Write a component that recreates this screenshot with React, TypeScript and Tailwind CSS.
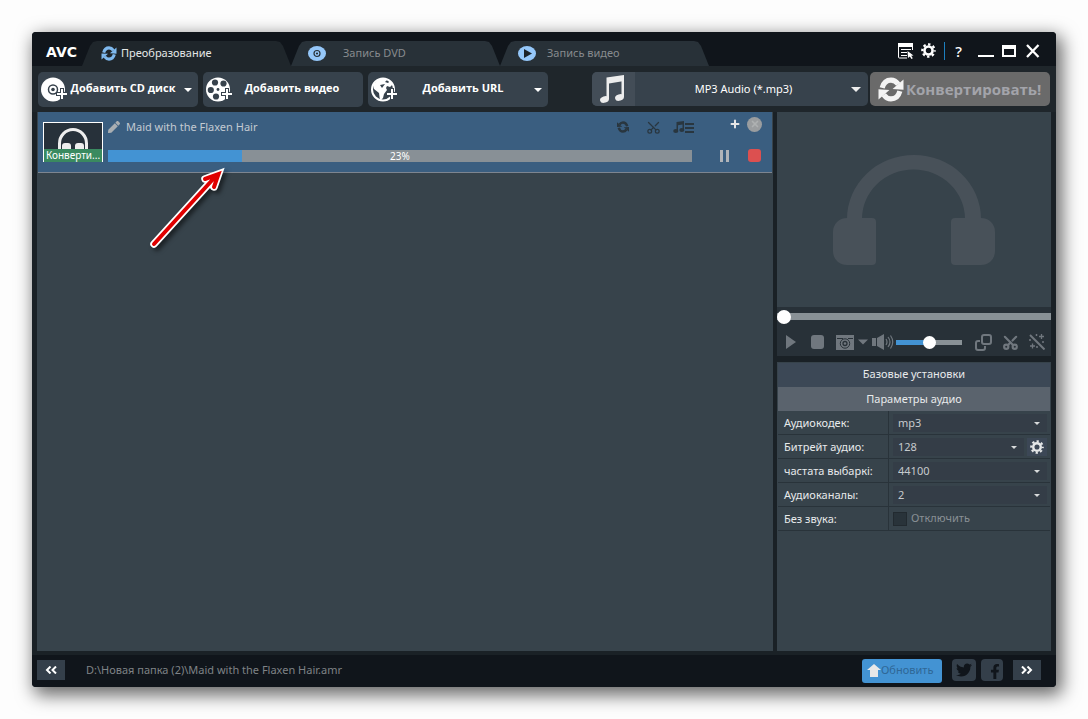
import { FC, ReactNode } from 'react';
import { FaFacebookF, FaPen, FaTwitter } from 'react-icons/fa';
import { Plus, Scissors, X } from 'lucide-react';

type IconProps = { className?: string };

const SyncIcon: FC<IconProps> = ({ className }) => (
  <svg viewBox="0 0 24 24" className={className} fill="currentColor" aria-hidden="true">
    <path d="M3.500 10.500C5 5 8 3 12 3c3 0 5 1.300 7 4" fill="none" stroke="currentColor" strokeWidth="5" />
    <path d="M24 2.500v9.700l-10.500-.7z" />
    <path d="M20.500 13.500C19 19 16 21 12 21c-3 0-5-1.300-7-4" fill="none" stroke="currentColor" strokeWidth="5" />
    <path d="M0 21.500v-9.700l10.500.7z" />
  </svg>
);

const Headphones: FC<IconProps> = ({ className }) => (
  <svg viewBox="0 0 162 110" className={className} fill="currentColor" aria-hidden="true">
    <path d="M14 64a67 64 0 0 1 134 0h-16a51 49 0 0 0-103 0z" />
    <path d="M14 63h25q4 0 4 4v39q0 4-4 4H14C6 110 0 104 0 96V77c0-8 6-14 14-14z" />
    <path d="M148 63h-26q-4 0-4 4v39q0 4 4 4h26c8 0 14-6 14-14V77c0-8-6-14-14-14z" />
  </svg>
);

const SmallHeadphones = () => (
  <svg viewBox="0 0 32 22" className="w-8 h-[22px] text-[#eeeeee]" aria-hidden="true">
    <path d="M2.500 22v-5.500a13.500 14 0 0 1 27 0V22" fill="none" stroke="currentColor" strokeWidth="3" />
    <path d="M5 22v-3q0-3 3-3h3q3 0 3 3v3zM18 22v-3q0-3 3-3h3q3 0 3 3v3z" fill="currentColor" />
  </svg>
);

const NoteIcon: FC<IconProps> = ({ className }) => (
  <svg viewBox="0 0 26 28" className={className} fill="currentColor" aria-hidden="true">
    <path d="M6.500 2.500 24 0v6L9 8.500V24H6.500z" />
    <path d="M21.500 3H24v19h-2.500z" />
    <ellipse cx="4.500" cy="24.500" rx="4.500" ry="3.200" transform="rotate(-18 4.500 24.500)" />
    <ellipse cx="19.500" cy="22.500" rx="4.500" ry="3.200" transform="rotate(-18 19.500 22.500)" />
  </svg>
);

const NoteListIcon = () => (
  <svg viewBox="0 0 22 12" className="w-[22px] h-3" fill="currentColor" aria-hidden="true">
    <path d="M3.500 1 11 0v9.500h-1.500V3.500L5 4.200V11H3.500z" />
    <ellipse cx="2.800" cy="10" rx="2.600" ry="1.900" />
    <ellipse cx="8.800" cy="9" rx="2.500" ry="1.900" />
    <path d="M12 2h9v2h-9zM12 6h9v2h-9zM12 10h9v2h-9z" />
  </svg>
);

// round white icons of the "add" buttons, all share the plus in the corner
const CornerPlus = () => (
  <>
    <path d="M15 15h4v-4h4v4h4v4h-4v4h-4v-4h-4z" fill="#37424c" />
    <path d="M16 16h4v-4h2v4h4v2h-4v4h-2v-4h-4z" fill="#fff" />
  </>
);

const DiscAdd = () => (
  <svg viewBox="0 0 27 25" className="w-[27px] h-[25px] shrink-0" aria-hidden="true">
    <circle cx="12" cy="12.500" r="12" fill="#fff" />
    <circle cx="12" cy="12.500" r="4.500" fill="#fff" stroke="#37424c" strokeWidth="1.500" />
    <circle cx="12" cy="12.500" r="1.800" fill="#37424c" />
    <CornerPlus />
  </svg>
);

const ReelAdd = () => (
  <svg viewBox="0 0 27 25" className="w-[27px] h-[25px] shrink-0" aria-hidden="true">
    <circle cx="12" cy="12.500" r="12" fill="#fff" />
    <g fill="#37424c">
      <circle cx="9" cy="5.500" r="3.100" />
      <circle cx="17.500" cy="6.500" r="3.100" />
      <circle cx="4.800" cy="13" r="3.100" />
      <circle cx="10" cy="19.500" r="3.100" />
      <circle cx="12" cy="12.500" r="1.400" />
    </g>
    <CornerPlus />
  </svg>
);

const GlobeAdd = () => (
  <svg viewBox="0 0 27 25" className="w-[27px] h-[25px] shrink-0" aria-hidden="true">
    <circle cx="12" cy="12.500" r="11" fill="none" stroke="#fff" strokeWidth="2" />
    <path
      d="M2 8 7 3l6-2 3 2-2 2 3 1 2-2 3 3-3 3-3-1-1 2 1 2-3 4-1 4-3 3-1-8-5-4z"
      fill="#fff"
    />
    <path d="m9 8 2 3 3-4z" fill="#37424c" />
    <CornerPlus />
  </svg>
);

const Caret: FC<IconProps> = ({ className }) => (
  <svg viewBox="0 0 10 5" className={className} fill="currentColor" aria-hidden="true">
    <path d="M0 0h10L5 5z" />
  </svg>
);

const LogIcon = () => (
  <svg viewBox="0 0 16 16" className="w-4 h-4" aria-hidden="true">
    <path d="M14.500 7V1H.500v13q0 1 1 1H9" fill="none" stroke="#fff" />
    <path d="M0 0h15v4H0zM3 6h10v1H3zM3 9h6v1H3zM3 12h6v1H3z" fill="#fff" />
    <path d="m9.500 8 6 4.500-2.300.300 1.600 2.500-1.400.700-1.500-2.600-1.900 1.600z" fill="#fff" />
  </svg>
);

const GearIcon: FC<IconProps> = ({ className }) => (
  <svg viewBox="0 0 16 16" className={className} fill="none" stroke="currentColor" aria-hidden="true">
    <circle cx="8" cy="8" r="4.300" strokeWidth="2.800" />
    <circle cx="8" cy="8" r="6.600" strokeWidth="2.400" strokeDasharray="2.600 2.584" strokeDashoffset="1.300" />
  </svg>
);

const CameraIcon = () => (
  <svg viewBox="0 0 18 15" className="w-[18px] h-[15px]" aria-hidden="true">
    <path d="M0 0h18v15H0z" fill="currentColor" />
    <path d="M1 3.500h6M12 3.500h5" stroke="#283138" />
    <circle cx="9" cy="8.500" r="4.700" fill="currentColor" stroke="#283138" />
    <circle cx="9" cy="8.500" r="2" fill="none" stroke="#283138" strokeWidth="1.300" />
  </svg>
);

const SpeakerIcon = () => (
  <svg viewBox="0 0 22 16" className="w-[22px] h-4" aria-hidden="true">
    <path d="M0 4h4v8H0zM5 4l7-4v16l-7-4z" fill="currentColor" />
    <path d="M14 5q2 3 0 6M16 3q4 5 0 10M18.500 1.500q4.500 6.500 0 13" fill="none" stroke="currentColor" strokeWidth="1.200" />
  </svg>
);

const OverlapIcon = () => (
  <svg viewBox="0 0 17 17" className="w-[17px] h-[17px]" fill="none" stroke="currentColor" strokeWidth="2" aria-hidden="true">
    <rect x="7" y="1" width="9" height="9" rx="2" />
    <path d="M5 7H3Q1 7 1 9v5q0 2 2 2h5q2 0 2-2v-2" />
  </svg>
);

const WandIcon = () => (
  <svg viewBox="0 0 16 16" className="w-4 h-4" fill="none" stroke="currentColor" aria-hidden="true">
    <path d="m1 1 14.500 14.500" strokeWidth="2" />
    <path d="M12.500 0v5M10 2.500h5M3.500 9.500v5M1 12h5" strokeWidth="1.300" />
    <path d="M7.500 0v2M6.500 1h2M14 7v2M13 8h2M8 12v2M7 13h2M1 5v2M0 6h2" />
  </svg>
);

type TabProps = { icon: ReactNode; label: string; active?: boolean; gap: string };

const Tab: FC<TabProps> = ({ icon, label, active, gap }) => (
  <button
    type="button"
    role="tab"
    aria-selected={!!active}
    className={`flex items-center ${gap} w-[209px] h-[25px] shrink whitespace-nowrap text-[11px] [clip-path:polygon(0_100%,8px_5px,11px_1px,15px_0,calc(100%-15px)_0,calc(100%-11px)_1px,calc(100%-8px)_5px,100%_100%)] ${
      active ? 'bg-[#1f262b] text-[#e4e6e6]' : 'bg-[#283138] text-[#878b8e]'
    }`}
  >
    {icon}
    <span>{label}</span>
  </button>
);

type AddProps = { icon: ReactNode; label: string; width: string; caret?: boolean };

const AddButton: FC<AddProps> = ({ icon, label, width, caret }) => (
  <button
    type="button"
    className={`${width} flex items-center h-[35px] rounded-[5px] bg-[#37424c] pl-[3px] pr-1.5 text-[11px] font-bold font-['Open_Sans',sans-serif] text-white whitespace-nowrap`}
  >
    {icon}
    <span className="flex-1 text-center pr-1.5 pb-0.5">{label}</span>
    {caret && <Caret className="w-2 h-1" />}
  </button>
);

type SelectProps = { id: string; value: string; gear?: boolean };

const SettingSelect: FC<SelectProps> = ({ id, value, gear }) => (
  <div className="flex flex-1 items-center gap-[3px] pl-1 pr-[3px]">
    <div className="relative flex-1">
      <select
        id={id}
        defaultValue={value}
        className="block w-full h-[18px] appearance-none bg-[#343d47] pl-[5px] text-[11px] leading-[18px] text-[#c6cacd] outline-none"
      >
        <option>{value}</option>
      </select>
      <Caret className="absolute right-[7px] top-2 w-1.5 h-[3px] text-[#d8dadb] pointer-events-none" />
    </div>
    {gear && (
      <button type="button" aria-label="Настройки битрейта" className="flex items-center justify-center w-5 h-[18px] bg-[#3c4756] text-[#e6e8e9]">
        <GearIcon className="w-3.5 h-3.5" />
      </button>
    )}
  </div>
);

const settings = [
  { id: 'codec', label: 'Аудиокодек:', value: 'mp3' },
  { id: 'bitrate', label: 'Битрейт аудио:', value: '128', gear: true },
  { id: 'rate', label: 'частата выбаркі:', value: '44100' },
  { id: 'channels', label: 'Аудиоканалы:', value: '2' },
];

const progress = 23;

const Header = () => (
  <header className="flex items-end h-[34px] bg-[#10151b]">
    <h1 className="w-[50px] shrink-0 pl-3.5 pb-1 text-sm font-bold text-white font-['DejaVu_Sans',sans-serif]">AVC</h1>
    <nav role="tablist" className="flex">
      <Tab active gap="gap-1 pl-[19px]" label="Преобразование" icon={<SyncIcon className="w-4 h-[15px] text-[#7fb9ee]" />} />
      <Tab
        gap="gap-[17px] pl-[17px]"
        label="Запись DVD"
        icon={
          <svg viewBox="0 0 18 15" className="w-[18px] h-[15px]" aria-hidden="true">
            <ellipse cx="9" cy="7.500" rx="9" ry="7.500" fill="#95c7f9" />
            <circle cx="9" cy="7.500" r="3" fill="none" stroke="#283138" strokeWidth="1.200" />
            <circle cx="9" cy="7.500" r="1.100" fill="#283138" />
          </svg>
        }
      />
      <Tab
        gap="gap-[11px] pl-[18px]"
        label="Запись видео"
        icon={
          <svg viewBox="0 0 18 15" className="w-[18px] h-[15px]" aria-hidden="true">
            <ellipse cx="9" cy="7.500" rx="9" ry="7.500" fill="#95c7f9" />
            <path d="M6 3v9l8-4.500z" fill="#1b2228" />
          </svg>
        }
      />
    </nav>
    <div className="ml-auto flex items-center h-full pt-1 pr-3.5 text-white">
      <button type="button" aria-label="Журнал"><LogIcon /></button>
      <button type="button" aria-label="Настройки" className="ml-[7px] pb-0.5"><GearIcon className="w-[15px] h-[15px]" /></button>
      <span className="w-px h-[18px] ml-2 bg-[#1c7fbf]" />
      <button type="button" aria-label="Справка" className="ml-2.5 text-[15px] leading-4 font-medium">?</button>
      <button type="button" aria-label="Свернуть" className="ml-4 w-4 h-3 border-b-2 border-white" />
      <button type="button" aria-label="Развернуть" className="ml-2 w-3.5 h-3 border-2 border-t-4 border-white" />
      <button type="button" aria-label="Закрыть" className="ml-2">
        <svg viewBox="0 0 18 18" className="w-[18px] h-[18px]" aria-hidden="true">
          <path d="m3 3 11.500 12M14.500 3 3 15" stroke="#fff" strokeWidth="2.300" />
        </svg>
      </button>
    </div>
  </header>
);

const Toolbar = () => (
  <div className="flex items-start gap-[5px] h-[46px] pt-1.5 px-1.5 bg-[#1f262b]">
    <AddButton icon={<DiscAdd />} label="Добавить CD диск" width="w-40" caret />
    <AddButton icon={<ReelAdd />} label="Добавить видео" width="w-40" />
    <AddButton icon={<GlobeAdd />} label="Добавить URL" width="w-[180px]" caret />
    <div className="ml-auto flex gap-0.5">
      <div className="relative flex w-[276px] h-[34px] rounded-[5px] overflow-hidden bg-[#37424c]">
        <span className="flex items-center w-[43px] pl-2 bg-[#434d57] text-[#ededed]">
          <NoteIcon className="w-[26px] h-7" />
        </span>
        <select
          aria-label="Формат"
          defaultValue="mp3"
          className="flex-1 appearance-none bg-transparent pr-4 text-[11px] text-white text-center [text-align-last:center] outline-none"
        >
          <option value="mp3">MP3 Audio (*.mp3)</option>
        </select>
        <Caret className="absolute right-[7px] top-[15px] w-2.5 h-[5px] text-[#ededed] pointer-events-none" />
      </div>
      <button
        type="button"
        className="flex items-center w-[180px] h-[34px] rounded-[5px] bg-[#6a6a6a] pl-2 gap-0.5 text-[15px] font-bold font-['Open_Sans',sans-serif] text-[#a3a4aa] whitespace-nowrap"
      >
        <SyncIcon className="w-[26px] h-[25px] shrink-0 text-[#f3f3f3]" />
        <span>Конвертировать!</span>
      </button>
    </div>
  </div>
);

const FileRow = () => (
  <div className="flex h-[61px] mx-px pl-[5px] bg-[#3a5e80] border-b border-[#7d8590]">
    <div className="mt-2.5 w-[60px] h-10 flex flex-col justify-end border border-b-0 border-white bg-[#27313a]">
      <div className="flex justify-center h-[22px]">
        <SmallHeadphones />
      </div>
      <p className="h-[13px] bg-[#3a8a60] text-center text-[10px] leading-[13px] text-white whitespace-nowrap">Конверти...</p>
    </div>
    <div className="flex-1 min-w-0 ml-[5px] pt-1.5">
      <div className="flex items-center h-[18px] text-[#c3cad2]">
        <FaPen className="w-3 h-3 text-[#a9aeb2]" />
        <span className="ml-1.5 text-[11px]">Maid with the Flaxen Hair</span>
        <div className="ml-auto mr-[-3px] flex items-center text-[#29363f]">
          <button type="button" aria-label="Обновить файл"><SyncIcon className="w-3 h-3 -scale-x-100" /></button>
          <button type="button" aria-label="Обрезать" className="ml-[17px]"><Scissors className="w-[15px] h-[15px] -rotate-90" /></button>
          <button type="button" aria-label="Звуковые дорожки" className="ml-3"><NoteListIcon /></button>
        </div>
      </div>
      <div
        role="progressbar"
        aria-label="Ход преобразования"
        aria-valuenow={progress}
        className="relative mt-3.5 h-3 bg-[#889096]"
      >
        <div className="h-full bg-[#4393d3]" style={{ width: `${progress}%` }} />
        <span className="absolute inset-0 text-center text-[10px] leading-3 text-white">{progress}%</span>
      </div>
    </div>
    <div className="w-20 pr-2.5 pt-1">
      <div className="flex items-center justify-end gap-1.5 h-4">
        <button type="button" aria-label="Добавить"><Plus className="w-3 h-3 text-[#e6e6e6]" strokeWidth={4} /></button>
        <button type="button" aria-label="Удалить" className="flex items-center justify-center w-[15px] h-[15px] rounded-full bg-[#9a9d9f]">
          <X className="w-2.5 h-2.5 text-[#aeb1b2]" strokeWidth={4} />
        </button>
      </div>
      <div className="flex items-center justify-end mt-[17px] h-[13px]">
        <button type="button" aria-label="Пауза" className="w-[9px] h-3 border-x-[3px] border-[#b0b4b9]" />
        <button type="button" aria-label="Стоп" className="ml-[19px] mr-px w-[13px] h-[13px] rounded-[3px] bg-[#dc5050]" />
      </div>
    </div>
  </div>
);

const Player = () => (
  <section className="bg-[#283138]">
    <div className="flex items-center justify-center h-[195px] bg-[#37434b]">
      <Headphones className="w-[162px] h-[110px] text-[#485159]" />
    </div>
    <div className="h-[49px]">
      <input
        type="range"
        aria-label="Позиция"
        defaultValue={0}
        className="block w-full h-[18px] appearance-none bg-transparent [&::-webkit-slider-runnable-track]:h-[7px] [&::-webkit-slider-runnable-track]:bg-[#899196] [&::-webkit-slider-thumb]:appearance-none [&::-webkit-slider-thumb]:w-3.5 [&::-webkit-slider-thumb]:h-3.5 [&::-webkit-slider-thumb]:-mt-[3px] [&::-webkit-slider-thumb]:rounded-full [&::-webkit-slider-thumb]:bg-white"
      />
      <div className="flex items-center h-[34px] pl-[9px] pr-1.5 text-[#70777e]">
        <button type="button" aria-label="Воспроизвести">
          <svg viewBox="0 0 10 14" className="w-2.5 h-3.5" fill="currentColor" aria-hidden="true"><path d="M0 0v14l10-7z" /></svg>
        </button>
        <button type="button" aria-label="Остановить" className="ml-[15px] w-[13px] h-3.5 rounded-[3px] bg-[#70777e]" />
        <button type="button" aria-label="Снимок" className="ml-3"><CameraIcon /></button>
        <button type="button" aria-label="Варианты снимка" className="ml-1"><Caret className="w-2.5 h-1.5" /></button>
        <button type="button" aria-label="Звук" className="ml-1"><SpeakerIcon /></button>
        <input
          type="range"
          aria-label="Громкость"
          defaultValue={50}
          className="ml-0.5 w-[66px] h-3.5 appearance-none bg-transparent [&::-webkit-slider-runnable-track]:h-[5px] [&::-webkit-slider-runnable-track]:bg-[linear-gradient(to_right,#4393d3_50%,#899196_50%)] [&::-webkit-slider-thumb]:appearance-none [&::-webkit-slider-thumb]:w-[13px] [&::-webkit-slider-thumb]:h-[13px] [&::-webkit-slider-thumb]:-mt-1 [&::-webkit-slider-thumb]:rounded-full [&::-webkit-slider-thumb]:bg-white"
        />
        <button type="button" aria-label="Окно" className="ml-auto"><OverlapIcon /></button>
        <button type="button" aria-label="Вырезать" className="ml-2.5"><Scissors className="w-[17px] h-[17px] -rotate-90" strokeWidth={3} /></button>
        <button type="button" aria-label="Эффекты" className="ml-2.5"><WandIcon /></button>
      </div>
    </div>
  </section>
);

const Settings = () => (
  <section className="flex-1 mt-1.5 px-px pt-px bg-[#37434b] text-[11px] text-[#e8eaeb]">
    <button type="button" className="block w-full h-6 pb-0.5 bg-[#3c4856]">Базовые установки</button>
    <button type="button" className="block w-full h-6 bg-[#5a636d]">Параметры аудио</button>
    {settings.map((row) => (
      <div key={row.id} className="flex h-6 border-b border-[#29333a]">
        <label htmlFor={row.id} className="w-[111px] shrink-0 pl-1.5 leading-[23px] border-r border-[#29333a] whitespace-nowrap">
          {row.label}
        </label>
        <SettingSelect id={row.id} value={row.value} gear={row.gear} />
      </div>
    ))}
    <div className="flex h-6 border-b border-[#29333a]">
      <span className="w-[111px] shrink-0 pl-1.5 leading-[23px] border-r border-[#29333a]">Без звука:</span>
      <label className="flex items-center gap-1 pl-1 text-[#899095]">
        <input type="checkbox" className="appearance-none w-3.5 h-3.5 bg-[#29333a] border border-[#222a30]" />
        Отключить
      </label>
    </div>
  </section>
);

const Footer = () => (
  <footer className="flex items-center h-8 px-[5px] pb-0.5 bg-[#10151b]">
    <button type="button" aria-label="Назад" className="flex items-center justify-center w-7 h-5 bg-[#343f4a] text-white">
      <svg viewBox="0 0 12 8" className="w-3 h-2" fill="none" stroke="currentColor" strokeWidth="2" aria-hidden="true"><path d="M5.500.500 2 4l3.500 3.500M11 .500 7.500 4 11 7.500" /></svg>
    </button>
    <span className="ml-[21px] pt-px text-[11px] text-[#7f8386] whitespace-nowrap">D:\Новая папка (2)\Maid with the Flaxen Hair.amr</span>
    <div className="ml-auto flex items-center pr-2.5">
      <button type="button" className="flex items-center w-20 h-6 mt-px rounded-[3px] bg-[#4393d3] pl-[5px] text-[11px] text-[#2f6796]">
        <svg viewBox="0 0 14 13" className="w-3.5 h-[13px] shrink-0 text-[#e8e8e8]" fill="currentColor" aria-hidden="true"><path d="m7 0 7 6h-3v7H3V6H0z" /></svg>
        Обновить
      </button>
      <a href="#twitter" aria-label="Twitter" className="flex items-center justify-center ml-2.5 w-6 h-[22px] rounded bg-[#343f4a] text-[#10151b]">
        <FaTwitter className="w-4 h-4" />
      </a>
      <a href="#facebook" aria-label="Facebook" className="flex items-end justify-center ml-[5px] w-[22px] h-[22px] rounded bg-[#343f4a] text-[#10151b]">
        <FaFacebookF className="ml-1.5 mb-0.5 w-3.5 h-[15px]" />
      </a>
      <button type="button" aria-label="Вперёд" className="flex items-center justify-center ml-2.5 w-7 h-5 bg-[#343f4a] text-white">
        <svg viewBox="0 0 12 8" className="w-3 h-2" fill="none" stroke="currentColor" strokeWidth="2" aria-hidden="true"><path d="M1 .500 4.500 4 1 7.500M6.500.500 10 4 6.500 7.500" /></svg>
      </button>
    </div>
  </footer>
);

const App = () => {
  return (
    <div className="min-h-screen flex p-8 bg-[#fdfdfd] font-['Noto_Sans','Open_Sans',sans-serif]">
      <div className="flex-1 flex flex-col rounded-[4px] overflow-hidden bg-[#1a2126] shadow-[4px_6px_18px_2px_rgba(0,0,0,0.6)]">
        <Header />
        <Toolbar />
        <main className="flex-1 flex gap-1 px-[5px] pb-1">
          <section className="relative flex-1 bg-[#37434b]">
            <FileRow />
            <svg
              viewBox="0 0 80 88"
              className="absolute left-[109px] top-[52px] w-20 h-[88px] drop-shadow-[3px_3px_2px_rgba(0,0,0,0.5)]"
              fill="none"
              strokeLinecap="round"
              aria-hidden="true"
            >
              <path d="M8 80 69 13M59 15l13.500-5L68 23" stroke="#fff" strokeWidth="7.500" />
              <path d="M8 80 69 13M59 15l13.500-5L68 23" stroke="#e00000" strokeWidth="4" />
            </svg>
          </section>
          <aside className="w-[274px] flex flex-col">
            <Player />
            <Settings />
          </aside>
        </main>
        <Footer />
      </div>
    </div>
  );
};

export default App;
